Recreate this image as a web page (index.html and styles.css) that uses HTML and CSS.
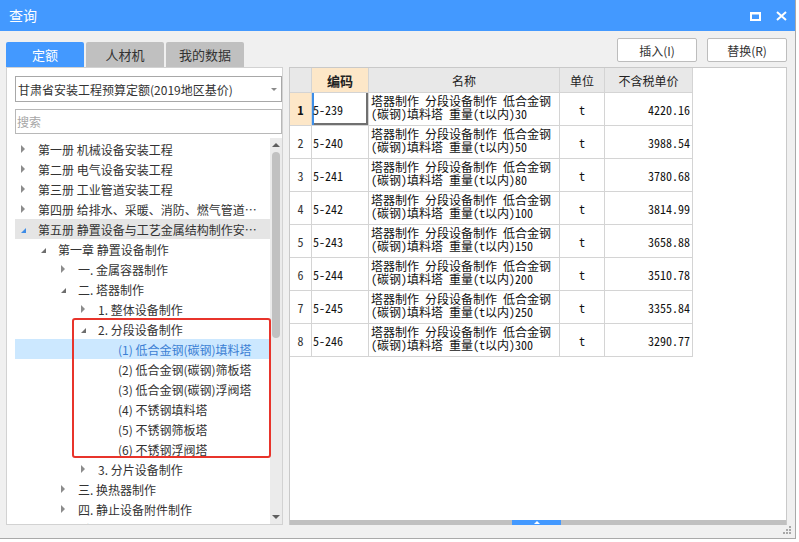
FILE: index.html
```html
<!DOCTYPE html>
<html lang="zh-CN">
<head>
<meta charset="utf-8">
<title>查询</title>
<link rel="stylesheet" href="styles.css">
</head>
<body>
<div class="window">
  <div class="titlebar">
    <span class="title">查询</span>
    <div class="win-btns">
      <svg class="ico-max" width="11" height="9" viewBox="0 0 11 9"><rect x="1" y="1.5" width="9" height="6.5" fill="none" stroke="#fff" stroke-width="2"/><line x1="0" y1="1" x2="11" y2="1" stroke="#fff" stroke-width="2"/></svg>
      <svg class="ico-close" width="11" height="10" viewBox="0 0 11 10"><path d="M1 1 L10 9 M10 1 L1 9" stroke="#fff" stroke-width="2" fill="none"/></svg>
    </div>
  </div>
  <div class="main">
    <div class="left">
      <div class="tabs">
        <div class="tab active">定额</div>
        <div class="tab">人材机</div>
        <div class="tab">我的数据</div>
      </div>
      <div class="panel">
        <div class="select"><span>甘肃省安装工程预算定额(2019地区基价)</span><i class="caret"></i></div>
        <div class="search">搜索</div>
        <div class="tree-wrap">
          <div class="tree">
            <div class="row l0"><i class="tw"><b class="ar-r"></b></i><span class="txt">第一册 机械设备安装工程</span></div>
            <div class="row l0"><i class="tw"><b class="ar-r"></b></i><span class="txt">第二册 电气设备安装工程</span></div>
            <div class="row l0"><i class="tw"><b class="ar-r"></b></i><span class="txt">第三册 工业管道安装工程</span></div>
            <div class="row l0"><i class="tw"><b class="ar-r"></b></i><span class="txt">第四册 给排水、采暖、消防、燃气管道安装工程</span></div>
            <div class="row l0 hover"><i class="tw"><b class="ar-d blue"></b></i><span class="txt">第五册 静置设备与工艺金属结构制作安装工程</span></div>
            <div class="row l1"><i class="tw"><b class="ar-d"></b></i><span class="txt">第一章 静置设备制作</span></div>
            <div class="row l2"><i class="tw"><b class="ar-r"></b></i><span class="txt">一. 金属容器制作</span></div>
            <div class="row l2"><i class="tw"><b class="ar-d"></b></i><span class="txt">二. 塔器制作</span></div>
            <div class="row l3"><i class="tw"><b class="ar-r"></b></i><span class="txt">1. 整体设备制作</span></div>
            <div class="row l3"><i class="tw"><b class="ar-d"></b></i><span class="txt">2. 分段设备制作</span></div>
            <div class="row l4 selected"><i class="tw"></i><span class="txt">(1) 低合金钢(碳钢)填料塔</span></div>
            <div class="row l4"><i class="tw"></i><span class="txt">(2) 低合金钢(碳钢)筛板塔</span></div>
            <div class="row l4"><i class="tw"></i><span class="txt">(3) 低合金钢(碳钢)浮阀塔</span></div>
            <div class="row l4"><i class="tw"></i><span class="txt">(4) 不锈钢填料塔</span></div>
            <div class="row l4"><i class="tw"></i><span class="txt">(5) 不锈钢筛板塔</span></div>
            <div class="row l4"><i class="tw"></i><span class="txt">(6) 不锈钢浮阀塔</span></div>
            <div class="row l3"><i class="tw"><b class="ar-r"></b></i><span class="txt">3. 分片设备制作</span></div>
            <div class="row l2"><i class="tw"><b class="ar-r"></b></i><span class="txt">三. 换热器制作</span></div>
            <div class="row l2"><i class="tw"><b class="ar-r"></b></i><span class="txt">四. 静止设备附件制作</span></div>
            <div class="row l1"><i class="tw"><b class="ar-d"></b></i><span class="txt">第二章 静置设备安装</span></div>
          </div>
          <div class="vscroll">
            <div class="sb-btn"><b class="sb-up"></b></div>
            <div class="sb-thumb"></div>
            <div class="sb-space"></div>
            <div class="sb-btn"><b class="sb-down"></b></div>
          </div>
          <div class="mark"></div>
        </div>
      </div>
    </div>
    <div class="right">
      <div class="toolbar">
        <div class="btn">插入(I)</div>
        <div class="btn">替换(R)</div>
      </div>
      <div class="gridbox">
        <div class="grid">
          <div class="c hd"></div>
          <div class="c hd code-hd">编码</div>
          <div class="c hd">名称</div>
          <div class="c hd">单位</div>
          <div class="c hd">不含税单价</div>

          <div class="c num cur">1</div>
          <div class="c code focus">5-239</div>
          <div class="c name">塔器制作 分段设备制作 低合金钢<br>(碳钢)填料塔 重量(t以内)30</div>
          <div class="c unit">t</div>
          <div class="c price">4220.16</div>

          <div class="c num">2</div>
          <div class="c code">5-240</div>
          <div class="c name">塔器制作 分段设备制作 低合金钢<br>(碳钢)填料塔 重量(t以内)50</div>
          <div class="c unit">t</div>
          <div class="c price">3988.54</div>

          <div class="c num">3</div>
          <div class="c code">5-241</div>
          <div class="c name">塔器制作 分段设备制作 低合金钢<br>(碳钢)填料塔 重量(t以内)80</div>
          <div class="c unit">t</div>
          <div class="c price">3780.68</div>

          <div class="c num">4</div>
          <div class="c code">5-242</div>
          <div class="c name">塔器制作 分段设备制作 低合金钢<br>(碳钢)填料塔 重量(t以内)100</div>
          <div class="c unit">t</div>
          <div class="c price">3814.99</div>

          <div class="c num">5</div>
          <div class="c code">5-243</div>
          <div class="c name">塔器制作 分段设备制作 低合金钢<br>(碳钢)填料塔 重量(t以内)150</div>
          <div class="c unit">t</div>
          <div class="c price">3658.88</div>

          <div class="c num">6</div>
          <div class="c code">5-244</div>
          <div class="c name">塔器制作 分段设备制作 低合金钢<br>(碳钢)填料塔 重量(t以内)200</div>
          <div class="c unit">t</div>
          <div class="c price">3510.78</div>

          <div class="c num">7</div>
          <div class="c code">5-245</div>
          <div class="c name">塔器制作 分段设备制作 低合金钢<br>(碳钢)填料塔 重量(t以内)250</div>
          <div class="c unit">t</div>
          <div class="c price">3355.84</div>

          <div class="c num">8</div>
          <div class="c code">5-246</div>
          <div class="c name">塔器制作 分段设备制作 低合金钢<br>(碳钢)填料塔 重量(t以内)300</div>
          <div class="c unit">t</div>
          <div class="c price">3290.77</div>
        </div>
        <div class="hbar"><span class="handle"><b></b></span></div>
      </div>
    </div>
  </div>
  <div class="statusbar">
    <svg class="grip" width="8" height="9" viewBox="0 0 8 9"><g fill="#a8a8a8"><rect x="6" y="0" width="2" height="2"/><rect x="3" y="3" width="2" height="2"/><rect x="6" y="3" width="2" height="2"/><rect x="0" y="6" width="2" height="2"/><rect x="3" y="6" width="2" height="2"/><rect x="6" y="6" width="2" height="2"/></g></svg>
  </div>
</div>
</body>
</html>
```
FILE: styles.css
```css
* { box-sizing: border-box; }
body {
  margin: 0;
  background: #ffffff;
  font-family: "Noto Sans CJK SC", "Noto Sans", sans-serif;
}
.window {
  width: 796px;
  height: 539px;
  background: #f0f0f0;
  border-right: 1px solid #a9a9a9;
  border-bottom: 1px solid #a9a9a9;
  display: flex;
  flex-direction: column;
}
.titlebar {
  height: 31px;
  flex: none;
  background: #4399ff;
  color: #fff;
  display: flex;
  align-items: center;
  padding: 0 8px 0 9px;
  font-size: 14px;
}
.title { flex: 1; line-height: 31px; }
.win-btns { display: flex; align-items: center; gap: 15px; }
.ico-max { margin-top: 1px; }

.main {
  flex: 1;
  min-height: 0;
  display: flex;
  gap: 6px;
  padding: 0 8px 0 6px;
}
.left { width: 277px; display: flex; flex-direction: column; }
.tabs { display: flex; gap: 2px; margin-top: 11px; height: 25px; flex: none; }
.tab {
  width: 78px;
  height: 25px;
  background: #c0c0c0;
  color: #333;
  font-size: 13px;
  display: flex;
  align-items: center;
  justify-content: center;
  border-radius: 2px 2px 0 0;
}
.tab.active { background: #4399ff; color: #fff; }

.panel {
  flex: 1;
  min-height: 0;
  background: #fff;
  border: 1px solid #d2d2d2;
  padding: 8px 0 0 8px;
  display: flex;
  flex-direction: column;
}
.select {
  height: 26px;
  flex: none;
  border: 1px solid #a8a8a8;
  display: flex;
  align-items: center;
  padding-left: 2px;
  font-size: 12px;
  color: #333;
}
.caret {
  margin-left: auto;
  margin-right: 4px;
  border-top: 3px solid #8a8a8a;
  border-left: 3px solid transparent;
  border-right: 3px solid transparent;
}
.search {
  height: 25px;
  flex: none;
  margin-top: 7px;
  border: 1px solid #b8b8b8;
  font-size: 12px;
  color: #a6a6a6;
  padding-left: 1px;
  display: flex;
  align-items: center;
}
.tree-wrap {
  flex: 1;
  min-height: 0;
  margin-top: 4px;
  display: flex;
  position: relative;
  overflow: hidden;
}
.tree {
  flex: 1;
  min-width: 0;
  padding-top: 1px;
  font-size: 12px;
  color: #333;
}
.row {
  height: 20px;
  display: flex;
  align-items: center;
  white-space: nowrap;
  padding-right: 10px;
}
.row.l1 { padding-left: 20px; }
.row.l2 { padding-left: 40px; }
.row.l3 { padding-left: 60px; }
.row.l4 { padding-left: 80px; }
.row.hover { background: #e5e5e5; }
.row.selected { background: #cce8ff; color: #3b7fd4; }
.tw {
  width: 16px;
  height: 20px;
  margin-right: 7px;
  flex: none;
  display: flex;
  align-items: center;
  justify-content: center;
}
.txt { overflow: hidden; text-overflow: ellipsis; min-width: 0; }
.ar-r {
  width: 0; height: 0;
  border-left: 4px solid #8c8c8c;
  border-top: 4px solid transparent;
  border-bottom: 4px solid transparent;
}
.ar-d {
  width: 0; height: 0;
  margin-top: 2px;
  border-bottom: 5px solid #6e6e6e;
  border-left: 5px solid transparent;
}
.ar-d.blue { border-bottom-color: #3d8be6; }

.vscroll {
  width: 12px;
  flex: none;
  background: #ebebeb;
  display: flex;
  flex-direction: column;
  align-items: center;
}
.sb-btn {
  height: 14px;
  flex: none;
  display: flex;
  align-items: center;
  justify-content: center;
}
.sb-up {
  border-bottom: 4px solid #5f5f5f;
  border-left: 4px solid transparent;
  border-right: 4px solid transparent;
}
.sb-down {
  border-top: 4px solid #5f5f5f;
  border-left: 4px solid transparent;
  border-right: 4px solid transparent;
}
.sb-thumb {
  width: 8px;
  height: 186px;
  background: #c1c1c1;
  border-radius: 4px;
}
.sb-space { flex: 1; }
.mark {
  position: absolute;
  left: 57px;
  top: 180px;
  width: 199px;
  height: 140px;
  border: 2px solid #e8342b;
  border-radius: 3px;
}

.right { width: 498px; display: flex; flex-direction: column; }
.toolbar {
  height: 36px;
  flex: none;
  display: flex;
  justify-content: flex-end;
  align-items: flex-start;
  gap: 10px;
  padding-top: 7px;
}
.btn {
  width: 80px;
  height: 24px;
  background: #fff;
  border: 1px solid #bdbdbd;
  border-radius: 2px;
  font-size: 12px;
  color: #333;
  display: flex;
  align-items: center;
  justify-content: center;
}
.gridbox {
  flex: 1;
  min-height: 0;
  background: #fff;
  border: 1px solid #c9c9c9;
  border-bottom: none;
  display: flex;
  flex-direction: column;
}
.grid {
  display: grid;
  grid-template-columns: 22px 57px 191px 45px 88px;
  grid-template-rows: 25px;
  grid-auto-rows: 33px;
  width: 403px;
  font-family: "Noto Sans Mono CJK SC", "Noto Sans CJK SC", monospace;
  font-size: 12px;
  color: #111;
}
.c {
  border-right: 1px solid #d4d4d4;
  border-bottom: 1px solid #d4d4d4;
  overflow: hidden;
  white-space: nowrap;
}
.hd {
  background: #e8e8e8;
  display: flex;
  align-items: center;
  justify-content: center;
  color: #222;
}
.code-hd { background: #fde7c8; font-weight: bold; font-size: 13px; }
.num {
  display: flex;
  align-items: center;
  justify-content: center;
  color: #333;
}
.num.cur { background: #fde7c8; font-weight: bold; color: #111; }
.code {
  display: flex;
  align-items: center;
  padding-left: 1px;
}
.code.focus {
  box-shadow: inset 2px 0 0 #3d8ee8, inset -2px -2px 0 #707070;
}
.c.name {
  padding: 1px 0 0 2px;
  line-height: 13px;
  overflow: visible;
}
.unit {
  display: flex;
  align-items: center;
  justify-content: center;
}
.price {
  display: flex;
  align-items: center;
  justify-content: flex-end;
  padding-right: 2px;
}
.hbar {
  height: 5px;
  flex: none;
  margin-top: auto;
  background: #c0c0c0;
  padding-left: 222px;
  display: flex;
}
.handle {
  width: 49px;
  background: #4399ff;
  display: flex;
  align-items: center;
  justify-content: center;
}
.handle b {
  border-bottom: 3px solid #fff;
  border-left: 3px solid transparent;
  border-right: 3px solid transparent;
}
.statusbar {
  height: 13px;
  flex: none;
  display: flex;
  justify-content: flex-end;
  align-items: flex-end;
  padding: 0 4px 3px 0;
}
```
